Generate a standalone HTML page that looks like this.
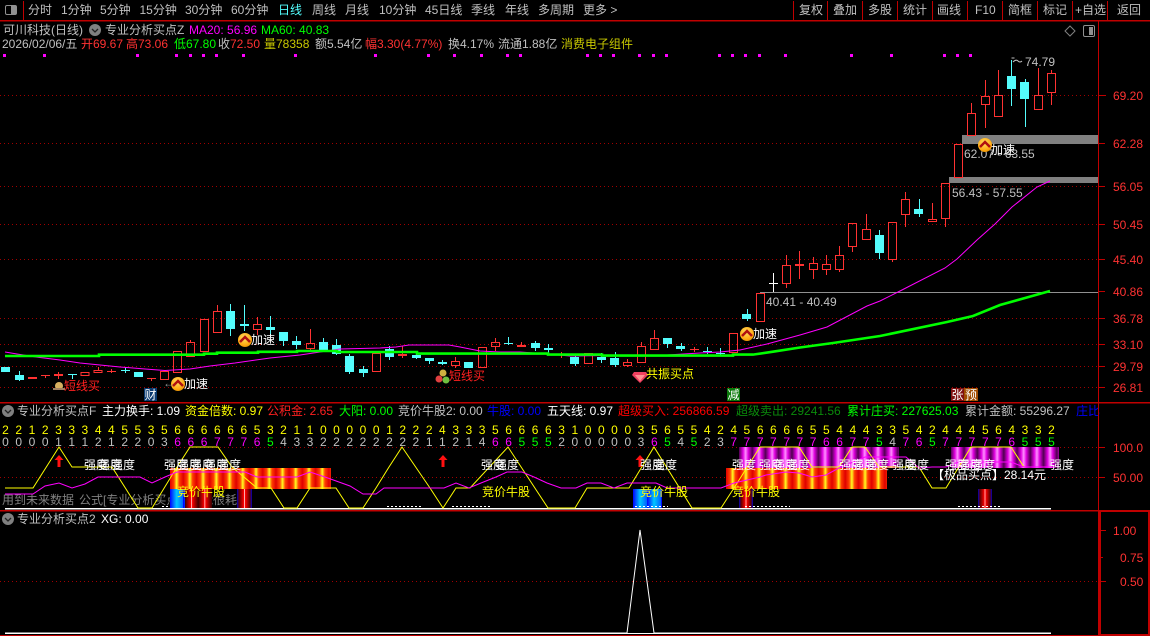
<!DOCTYPE html>
<html><head><meta charset="utf-8"><style>
html,body{margin:0;padding:0;background:#000;width:1150px;height:636px;overflow:hidden}
svg{display:block;font-family:"Liberation Sans","WenQuanYi Zen Hei","Noto Sans CJK SC",sans-serif;font-size:12px}
text{fill:#c0c0c0;white-space:pre}
.w{fill:#fff}.y{fill:#ffff00}.r{fill:#ff3232}.g{fill:#00ff00}.m{fill:#ff00ff}.b{fill:#0000ff}.o{fill:#c8c800}
</style></head><body>
<svg width="1150" height="636" viewBox="0 0 1150 636" xmlns="http://www.w3.org/2000/svg">
<defs>
<linearGradient id="gy" gradientUnits="userSpaceOnUse" x1="170" x2="183.24" y1="0" y2="0" spreadMethod="repeat"><stop offset="0" stop-color="#e00000"/><stop offset=".3" stop-color="#ff4000"/><stop offset=".5" stop-color="#ffff20"/><stop offset=".7" stop-color="#ff4000"/><stop offset="1" stop-color="#e00000"/></linearGradient>
<linearGradient id="gm" gradientUnits="userSpaceOnUse" x1="739" x2="752.24" y1="0" y2="0" spreadMethod="repeat"><stop offset="0" stop-color="#500050"/><stop offset=".3" stop-color="#e000e0"/><stop offset=".5" stop-color="#ff90ff"/><stop offset=".7" stop-color="#e000e0"/><stop offset="1" stop-color="#500050"/></linearGradient>
<linearGradient id="gb" gradientUnits="userSpaceOnUse" x1="170" x2="183.24" y1="0" y2="0" spreadMethod="repeat"><stop offset="0" stop-color="#0000ff"/><stop offset=".5" stop-color="#00c8ff"/><stop offset="1" stop-color="#0060ff"/></linearGradient>
<linearGradient id="gb2" gradientUnits="userSpaceOnUse" x1="633" x2="647" y1="0" y2="0" spreadMethod="repeat"><stop offset="0" stop-color="#0000ff"/><stop offset=".5" stop-color="#00c8ff"/><stop offset="1" stop-color="#0060ff"/></linearGradient>
<linearGradient id="gd" gradientUnits="userSpaceOnUse" x1="185" x2="198.24" y1="0" y2="0" spreadMethod="repeat"><stop offset="0" stop-color="#400000"/><stop offset=".45" stop-color="#ff0000"/><stop offset=".5" stop-color="#ffffff"/><stop offset=".55" stop-color="#ff0000"/><stop offset="1" stop-color="#400000"/></linearGradient>
<linearGradient id="gd2" gradientUnits="userSpaceOnUse" x1="739" x2="753" y1="0" y2="0"><stop offset="0" stop-color="#0000c0"/><stop offset=".15" stop-color="#600000"/><stop offset=".45" stop-color="#ff0000"/><stop offset=".5" stop-color="#ffffff"/><stop offset=".55" stop-color="#ff0000"/><stop offset=".85" stop-color="#600000"/><stop offset="1" stop-color="#0000c0"/></linearGradient>
<linearGradient id="gd3" gradientUnits="userSpaceOnUse" x1="978" x2="992" y1="0" y2="0"><stop offset="0" stop-color="#0000c0"/><stop offset=".15" stop-color="#600000"/><stop offset=".45" stop-color="#ff0000"/><stop offset=".5" stop-color="#ffffff"/><stop offset=".55" stop-color="#ff0000"/><stop offset=".85" stop-color="#600000"/><stop offset="1" stop-color="#0000c0"/></linearGradient>
<linearGradient id="gd4" gradientUnits="userSpaceOnUse" x1="237" x2="252" y1="0" y2="0"><stop offset="0" stop-color="#0000c0"/><stop offset=".15" stop-color="#600000"/><stop offset=".45" stop-color="#ff0000"/><stop offset=".5" stop-color="#ffffff"/><stop offset=".55" stop-color="#ff0000"/><stop offset=".85" stop-color="#600000"/><stop offset="1" stop-color="#0000c0"/></linearGradient>
<radialGradient id="coin" cx=".45" cy=".35" r=".75"><stop offset="0" stop-color="#ffe060"/><stop offset=".7" stop-color="#ffa810"/><stop offset="1" stop-color="#d08000"/></radialGradient>
</defs>
<rect width="1150" height="636" fill="#000"/>

<!-- nav -->
<g shape-rendering="crispEdges" fill="#c00000">
<rect x="0" y="20" width="1150" height="1.5"/><rect x="23" y="1" width="1" height="20"/>
<rect x="793" y="1" width="1" height="20"/><rect x="827" y="1" width="1" height="20"/><rect x="862" y="1" width="1" height="20"/><rect x="897" y="1" width="1" height="20"/><rect x="932" y="1" width="1" height="20"/><rect x="967" y="1" width="1" height="20"/><rect x="1002" y="1" width="1" height="20"/><rect x="1037" y="1" width="1" height="20"/><rect x="1072" y="1" width="1" height="20"/><rect x="1107" y="1" width="1" height="20"/>
</g>
<rect x="5.5" y="5.5" width="11" height="9" rx="1.5" fill="none" stroke="#909090"/><rect x="11" y="6" width="5" height="8" fill="#909090"/>
<text x="28" y="14">分时</text><text x="61" y="14">1分钟</text><text x="100" y="14">5分钟</text><text x="139.5" y="14">15分钟</text><text x="185" y="14">30分钟</text><text x="231" y="14">60分钟</text><text x="278" y="14" fill="#54ffff" style="fill:#54ffff">日线</text><text x="312" y="14">周线</text><text x="345" y="14">月线</text><text x="379" y="14">10分钟</text><text x="425" y="14">45日线</text><text x="471" y="14">季线</text><text x="505" y="14">年线</text><text x="538" y="14">多周期</text><text x="583" y="14">更多 &gt;</text>
<text x="799" y="14">复权</text><text x="833" y="14">叠加</text><text x="868" y="14">多股</text><text x="903" y="14">统计</text><text x="937" y="14">画线</text><text x="975" y="14">F10</text><text x="1008" y="14">简框</text><text x="1043" y="14">标记</text><text x="1075" y="14">+自选</text><text x="1117" y="14">返回</text>

<!-- header lines -->
<text x="3" y="34">可川科技(日线)</text>
<circle cx="95" cy="30" r="6" fill="#808080"/><path d="M92 29l3 3 3-3" fill="none" stroke="#222" stroke-width="1.3"/>
<text x="105" y="34">专业分析买点Z</text><text x="189" y="34" class="m">MA20: 56.96</text><text x="261" y="34" class="g">MA60: 40.83</text>
<text x="2" y="48">2026/02/06/五</text>
<text x="81" y="48" class="r">开69.67</text><text x="126" y="48" class="r">高73.06</text><text x="174" y="48" class="g">低67.80</text><text x="218" y="48">收</text><text x="230" y="48" class="r">72.50</text><text x="264" y="48" class="o">量78358</text><text x="315" y="48">额5.54亿</text><text x="365" y="48" class="r">幅3.30(4.77%)</text><text x="448" y="48">换4.17%</text><text x="498" y="48">流通1.88亿</text><text x="561" y="48" class="o">消费电子组件</text>
<path d="M1070 26l5 5-5 5-5-5z" fill="none" stroke="#808080"/>
<rect x="1083.5" y="25.5" width="11" height="11" rx="1.5" fill="none" stroke="#909090"/><rect x="1089" y="27" width="4" height="8" fill="#909090"/>
<g fill="#ff00ff" shape-rendering="crispEdges"><path d="M3 54h3v3h-3zM43 54h3v3h-3zM136 54h3v3h-3zM175 54h3v3h-3zM189 54h3v3h-3zM202 54h3v3h-3zM215 54h3v3h-3zM242 54h3v3h-3zM294 54h3v3h-3zM374 54h3v3h-3zM427 54h3v3h-3zM453 54h3v3h-3zM480 54h3v3h-3zM506 54h3v3h-3zM519 54h3v3h-3zM586 54h3v3h-3zM599 54h3v3h-3zM612 54h3v3h-3zM638 54h3v3h-3zM652 54h3v3h-3zM665 54h3v3h-3zM718 54h3v3h-3zM731 54h3v3h-3zM744 54h3v3h-3zM758 54h3v3h-3zM784 54h3v3h-3zM850 54h3v3h-3zM890 54h3v3h-3zM943 54h3v3h-3zM956 54h3v3h-3zM969 54h3v3h-3z"/></g>

<!-- grid -->
<g stroke="#a00000" stroke-dasharray="1 3" fill="none" shape-rendering="crispEdges"><path d="M0 95.5H1098M0 143.5H1098M0 186.5H1098M0 224.5H1098M0 259.5H1098M0 318.5H1098M0 344.5H1098M0 366.5H1098M0 387.5H1098M0 447.5H1098M0 477.5H1098M0 581.5H1098"/></g>
<!-- gray bands -->
<rect x="962" y="135" width="136" height="9" fill="#808080"/><rect x="949" y="177" width="149" height="6" fill="#808080"/>
<path d="M760 292.5H1098" stroke="#909090" shape-rendering="crispEdges"/>

<!-- candles -->
<g shape-rendering="crispEdges">
<path fill="none" stroke="#ff3232" d="M81 372.5h8v3h-8zM94 370.5h8v2h-8zM160.500 371.500h8v8h-8zM173.500 351.500h8v21h-8zM186.500 342.500h8v14h-8zM200.500 319.500h8v32h-8zM213.500 311.500h8v21h-8zM253.500 324.500h8v5h-8zM306.500 343.500h8v5h-8zM372.500 353.500h8v18h-8zM451.500 361.500h8v4h-8zM478.500 347.500h8v20h-8zM491.500 342.500h8v4h-8zM584.500 353.500h8v10h-8zM623.500 362.500h8v3h-8zM637.500 346.500h8v16h-8zM650.500 338.500h8v11h-8zM729.500 333.500h8v19h-8zM756.500 293.500h8v28h-8zM782.500 265.500h8v18h-8zM809.500 263.500h8v6h-8zM822.500 264.500h8v5h-8zM835.500 255.500h8v14h-8zM848.500 223.500h8v23h-8zM862.500 229.500h8v10h-8zM888.500 222.500h8v37h-8zM901.500 199.500h8v15h-8zM928.500 219.500h8v2h-8zM941.500 183.500h8v35h-8zM954.500 144.500h8v33h-8zM967.500 113.500h8v22h-8zM981.500 96.500h8v8h-8zM994.500 95.500h8v21h-8zM1034.500 95.500h8v14h-8zM1047.500 73.500h8v19h-8z"/>
<path fill="none" stroke="#ff3232" d="M98.500 367V370M190.500 340V342M217.500 305V311M257.500 317V324M257.500 330V335M310.500 329V343M310.500 349V350M455.500 357V361M455.500 366V368M495.500 338V342M495.500 347V351M627.500 359V362M627.500 366V367M641.500 342V346M654.500 330V338M786.500 255V265M786.500 284V288M799.500 251V279M813.500 257V263M813.500 270V279M826.500 255V264M826.500 270V275M839.500 246V255M839.500 270V272M852.500 247V252M866.500 214V229M892.500 260V262M905.500 192V199M905.500 215V227M932.500 203V219M945.500 219V227M971.500 103V113M985.500 80V96M985.500 105V128M998.500 70V95M1038.500 68V95M1051.500 70V73M1051.500 93V105M45.500 375V378M41 375.500h9M58.500 372V379M111.500 369V373M107 371.500h9M151.500 378V381M147 378.500h9M561.500 352V358M694.500 347V352M690 349.500h9M402.500 346V358M521.500 342V345"/>
<path fill="#ff3232" d="M28 377h9v2h-9zM54 374h9v2h-9zM398 354h9v2h-9zM517 345h9v2h-9zM795 264h9v2h-9z"/>
<path fill="none" stroke="#54fcfc" d="M19.500 371V381M72.500 374V379M68 374.500h9M125.500 367V373M121 370.500h9M230.500 304V336M244.500 305V331M270.500 316V337M283.500 332V346M296.500 336V349M323.500 338V350M336.500 339V355M349.500 354V374M363.500 366V377M389.500 346V360M416.500 351V359M429.500 358V364M442.500 360V365M508.500 337V345M504 343.500h9M535.500 341V351M548.500 344V354M575.500 355V366M601.500 353V363M615.500 352V367M667.500 338V348M681.500 343V351M707.500 347V354M703 351.500h9M720.500 348V355M716 353.500h9M747.500 309V321M879.500 230V259M919.500 199V217M1011.500 60V106M1025.500 79V127"/>
<path fill="#54fcfc" d="M1 367h9v5h-9zM15 375h9v5h-9zM134 372h9v5h-9zM226 311h9v18h-9zM240 324h9v2h-9zM266 327h9v3h-9zM279 332h9v9h-9zM292 341h9v4h-9zM319 342h9v8h-9zM332 345h9v9h-9zM345 356h9v16h-9zM359 369h9v4h-9zM385 349h9v8h-9zM412 355h9v3h-9zM425 358h9v3h-9zM438 362h9v2h-9zM464 362h9v6h-9zM531 343h9v5h-9zM544 348h9v2h-9zM570 357h9v7h-9zM597 357h9v3h-9zM610 358h9v7h-9zM663 338h9v6h-9zM676 346h9v3h-9zM742 314h9v5h-9zM875 235h9v18h-9zM914 209h9v5h-9zM1007 76h9v13h-9zM1020 82h9v17h-9z"/>
<path fill="none" stroke="#fff" d="M773.500 273V292M769 283.500h9"/>
</g>

<!-- MAs -->
<polyline fill="none" stroke="#ff00ff" stroke-width="1" points="5,352 17,354 36,357 60,360 80,363 100,365 120,367 145,369 165,370.500 190,369 210,366 235,363 270,358 300,355 340,349 380,348 396,347 409,345 449,345 460,347 480,351 500,352 520,352 548,354 570,356 650,355 667,355 700,353 720,352 740,350 767,344 800,335 827,327 867,306 880,301 900,291 945,268 957,259 977,240 995,224 1012,207 1037,187 1050,181"/>
<path fill="none" stroke="#00ff00" stroke-width="2.6" d="M5 356H99V354.700H204V353.700H217V352.700H258V351.800H297V351H337V352H417V353.600H548V354.600H602V355.600H733V354.600H753L773 351.700 800 347.500 833 343 880 336 947 322 973 316 1000 305 1025 298 1050 291"/>

<!-- labels on main -->
<text x="1025" y="66">74.79</text><path d="M1011.500 58h3M1013 62q3-3 5-1t4 0" fill="none" stroke="#c0c0c0"/>
<text x="964" y="158">62.07 - 63.55</text><text x="952" y="197">56.43 - 57.55</text><text x="766" y="306">40.41 - 40.49</text>
<g id="ic1"><circle cx="245" cy="340" r="7" fill="url(#coin)"/><path d="M240 342l5-5 5 5" fill="none" stroke="#b01010" stroke-width="2.500"/></g>
<text x="251" y="344" class="w">加速</text>
<circle cx="178" cy="384" r="7" fill="url(#coin)"/><path d="M173 386l5-5 5 5" fill="none" stroke="#b01010" stroke-width="2.500"/><text x="184" y="388" class="w">加速</text>
<text x="163" y="387" style="fill:#909090">←</text>
<circle cx="747" cy="334" r="7" fill="url(#coin)"/><path d="M742 336l5-5 5 5" fill="none" stroke="#b01010" stroke-width="2.500"/><text x="753" y="338" class="w">加速</text>
<circle cx="985" cy="145" r="7" fill="url(#coin)"/><path d="M980 147l5-5 5 5" fill="none" stroke="#b01010" stroke-width="2.500"/><text x="991" y="154" class="w">加速</text>
<circle cx="59" cy="386" r="4" fill="#d8b060"/><path d="M53 389h12" stroke="#a08060" stroke-width="2"/><text x="64" y="390" style="fill:#ff2020">短线买</text>
<circle cx="443" cy="373" r="3.500" fill="#d0b040"/><circle cx="439" cy="379" r="3.500" fill="#e04040"/><circle cx="446" cy="380" r="3.500" fill="#70c040"/><text x="449" y="380" style="fill:#ff2020">短线买</text>
<path d="M634 372h12l2 3-8 8-8-8z" fill="#f04060"/><path d="M635 375h10l-5 6z" fill="#ff9090"/><text x="646" y="378" class="y">共振买点</text>
<rect x="144" y="388" width="13" height="13" fill="#0a3a70"/><text x="144.500" y="399" class="w">财</text>
<rect x="727" y="388" width="13" height="13" fill="#0a780a"/><text x="727.500" y="399" class="w">减</text>
<rect x="951" y="388" width="13" height="13" fill="#801010"/><text x="951.500" y="399" class="w">张</text>
<rect x="964" y="388" width="14" height="13" fill="#a04c00"/><text x="965" y="399" class="w">预</text>

<!-- price axis -->
<g class="r"><text x="1113" y="100" class="r">69.20</text><text x="1113" y="148" class="r">62.28</text><text x="1113" y="191" class="r">56.05</text><text x="1113" y="229" class="r">50.45</text><text x="1113" y="264" class="r">45.40</text><text x="1113" y="296" class="r">40.86</text><text x="1113" y="323" class="r">36.78</text><text x="1113" y="349" class="r">33.10</text><text x="1113" y="371" class="r">29.79</text><text x="1113" y="392" class="r">26.81</text><text x="1113" y="452" class="r">100.0</text><text x="1113" y="482" class="r">50.00</text><text x="1113" y="535" class="r">1.00</text><text x="1120" y="562" class="r">0.75</text><text x="1120" y="586" class="r">0.50</text></g>

<!-- panel 2 header -->
<circle cx="8" cy="411" r="6" fill="#808080"/><path d="M5 410l3 3 3-3" fill="none" stroke="#222" stroke-width="1.300"/>
<text x="17" y="415">专业分析买点F</text><text x="102" y="415" class="w">主力换手: 1.09</text><text x="185" y="415" class="y">资金倍数: 0.97</text><text x="267" y="415" style="fill:#ff2020">公积金: 2.65</text><text x="339" y="415" class="g">大阳: 0.00</text><text x="398" y="415">竞价牛股2: 0.00</text><text x="487" y="415" class="b">牛股: 0.00</text><text x="547" y="415" class="w">五天线: 0.97</text><text x="618" y="415" style="fill:#ff0000">超级买入: 256866.59</text><text x="736" y="415" style="fill:#0a8a0a">超级卖出: 29241.56</text><text x="847" y="415" class="g">累计庄买: 227625.03</text><text x="965" y="415">累计金额: 55296.27</text><text x="1076" y="415" class="b">庄比</text>

<!-- digits -->
<text text-anchor="middle" y="434" class="y" x="5.500 18.700 32 45.200 58.500 71.700 84.900 98.200 111.400 124.700 137.900 151.100 164.400 177.600 190.900 204.100 217.300 230.600 243.800 257.100 270.300 283.500 296.800 310 323.300 336.500 349.700 363 376.200 389.500 402.700 415.900 429.200 442.400 455.700 468.900 482.100 495.400 508.600 521.900 535.100 548.300 561.600 574.800 588.100 601.300 614.500 627.800 641 654.300 667.500 680.700 694 707.200 720.500 733.700 746.900 760.200 773.400 786.700 799.900 813.100 826.400 839.600 852.900 866.100 879.300 892.600 905.800 919.100 932.300 945.500 958.800 972 985.300 998.500 1011.700 1025 1038.200 1051.500">22123334455356666665321100000122243335666631000035655424566665544433542444564332</text>
<text text-anchor="middle" y="446" x="5.500 18.700 32 45.200 58.500 71.700 84.900 98.200 111.400 124.700 137.900 151.100 164.400 177.600 190.900 204.100 217.300 230.600 243.800 257.100 270.300 283.500 296.800 310 323.300 336.500 349.700 363 376.200 389.500 402.700 415.900 429.200 442.400 455.700 468.900 482.100 495.400 508.600 521.900 535.100 548.300 561.600 574.800 588.100 601.300 614.500 627.800 641 654.300 667.500 680.700 694 707.200 720.500 733.700 746.900 760.200 773.400 786.700 799.900 813.100 826.400 839.600 852.900 866.100 879.300 892.600 905.800 919.100 932.300 945.500 958.800 972 985.300 998.500 1011.700 1025 1038.200 1051.500">0000111212203<tspan class="m">6667776</tspan><tspan class="g">5</tspan>4332222222211214<tspan class="m">66</tspan><tspan class="g">555</tspan>2000003<tspan class="m">6</tspan><tspan class="g">5</tspan>4<tspan class="g">5</tspan>23<tspan class="m">77777776677</tspan><tspan class="g">5</tspan>4<tspan class="m">76</tspan><tspan class="g">5</tspan><tspan class="m">777776</tspan><tspan class="g">555</tspan></text>

<!-- panel 2 art -->
<text x="2" y="504" style="fill:#808080">用到未来数据</text><text x="79" y="504" style="fill:#808080">公式[专业分析买点F]可能很耗</text>
<g shape-rendering="crispEdges">
<rect x="170" y="468" width="161" height="21" fill="url(#gy)"/>
<rect x="726" y="468" width="161" height="21" fill="url(#gy)"/>
<rect x="739" y="447" width="160" height="21" fill="url(#gm)"/>
<rect x="951" y="447" width="108" height="21" fill="url(#gm)"/>
<rect x="170" y="489" width="15" height="19" fill="url(#gb)"/>
<rect x="185" y="489" width="27" height="19" fill="url(#gd)"/>
<rect x="237" y="489" width="15" height="19" fill="url(#gd4)"/>
<rect x="633" y="489" width="29" height="19" fill="url(#gb2)"/>
<rect x="739" y="489" width="14" height="19" fill="url(#gd2)"/>
<rect x="978" y="489" width="14" height="19" fill="url(#gd3)"/>
<path d="M5 508.500H1051" stroke="#fff" stroke-width="1.500"/>
<path d="M162 506.500h6M387 506.500H421M452 506.500H490M635 506.500H668M745 506.500H790M958 506.500H1000" stroke="#fff" stroke-dasharray="2 2"/>
</g>
<polyline fill="none" stroke="#ffff00" points="5,488 33,488 59,447 72,467 112,467 138,508 152,508 177,467 190,447 218,447 232,467 257,488 271,488 284,508 297,508 310,488 336,488 349,508 363,508 376,488 389,467 402,447 430,488 443,508 456,488 470,488 508,447 548,508 575,508 587,488 614,488 629,488 654,447 692,508 721,508 734,488 760,447 799,447 812,467 839,467 852,447 865,447 879,467 919,467 932,488 946,488 971,447 1011,447 1024,467 1051,467"/>
<polyline fill="none" stroke="#ff00ff" points="5,494 33,494 45,486 59,483 72,488 85,484 98,477 140,477 152,483 165,477 177,472 245,472 257,477 297,477 310,472 325,477 350,486 363,494 376,494 384,488 444,488 456,483 469,488 481,483 496,477 507,472 522,472 534,477 547,483 561,488 576,488 587,483 601,483 614,488 627,483 656,483 667,488 721,488 734,483 760,477 766,475 786,472 799,473 812,477 826,475 839,468 865,457 879,457 906,457 919,468 932,467 946,467 959,462 1011,462 1024,467 1051,467"/>
<path fill="#ff1010" d="M59 455l-4.500 5h3v7h3v-7h3zM443 455l-4.500 5h3v7h3v-7h3zM640 455l-4.500 5h3v7h3v-7h3z"/>
<g class="w">
<text x="84" y="469" class="w">强度</text><text x="98" y="469" class="w">强度</text><text x="111" y="469" class="w">强度</text>
<text x="164" y="469" class="w">强度</text><text x="177" y="469" class="w">强度</text><text x="190" y="469" class="w">强度</text><text x="204" y="469" class="w">强度</text><text x="217" y="469" class="w">强度</text>
<text x="481" y="469" class="w">强度</text><text x="495" y="469" class="w">强度</text>
<text x="640" y="469" class="w">强度</text><text x="653" y="469" class="w">强度</text>
<text x="732" y="469" class="w">强度</text><text x="759" y="469" class="w">强度</text><text x="773" y="469" class="w">强度</text><text x="786" y="469" class="w">强度</text>
<text x="839" y="469" class="w">强度</text><text x="852" y="469" class="w">强度</text><text x="865" y="469" class="w">强度</text>
<text x="892" y="469" class="w">强度</text><text x="905" y="469" class="w">强度</text>
<text x="945" y="469" class="w">强度</text><text x="958" y="469" class="w">强度</text><text x="971" y="469" class="w">强度</text>
<text x="1050" y="469" class="w">强度</text>
</g>
<text x="177" y="496" class="y">竞价牛股</text><text x="482" y="496" class="y">竞价牛股</text><text x="640" y="496" class="y">竞价牛股</text><text x="732" y="496" class="y">竞价牛股</text>
<text x="932" y="479" class="w">【极品买点】28.14元</text>

<!-- panel 3 -->
<circle cx="8" cy="519" r="6" fill="#808080"/><path d="M5 518l3 3 3-3" fill="none" stroke="#222" stroke-width="1.300"/>
<text x="17" y="523">专业分析买点2</text><text x="101" y="523" class="w">XG: 0.00</text>
<polyline fill="none" stroke="#fff" points="5,633 627,633 640,530 654,633 1051,633"/>
<path d="M5 633.500H1051" stroke="#fff" stroke-width="1" shape-rendering="crispEdges"/>

<!-- frame -->
<g fill="#c00000" shape-rendering="crispEdges">
<rect x="0" y="402" width="1150" height="1.500"/><rect x="0" y="510" width="1150" height="1.500"/><rect x="0" y="635" width="1150" height="1"/>
<rect x="1098" y="21" width="1" height="615"/>
<rect x="1099" y="510" width="51" height="2"/>
<rect x="1099" y="634" width="51" height="2"/>
<rect x="1148" y="510" width="2" height="126"/>
<rect x="1099" y="510" width="2" height="126"/>
<path d="M1101 95h5v1h-5zM1099 95h2v1h-2zM1099 143h6v1h-6zM1099 186h6v1h-6zM1099 224h6v1h-6zM1099 259h6v1h-6zM1099 291h6v1h-6zM1099 318h6v1h-6zM1099 344h6v1h-6zM1099 366h6v1h-6zM1099 387h6v1h-6zM1099 447h6v1h-6zM1099 477h6v1h-6zM1101 530h5v1h-5zM1101 557h2v1h-2zM1101 581h5v1h-5z"/>
</g>
</svg>
</body></html>
